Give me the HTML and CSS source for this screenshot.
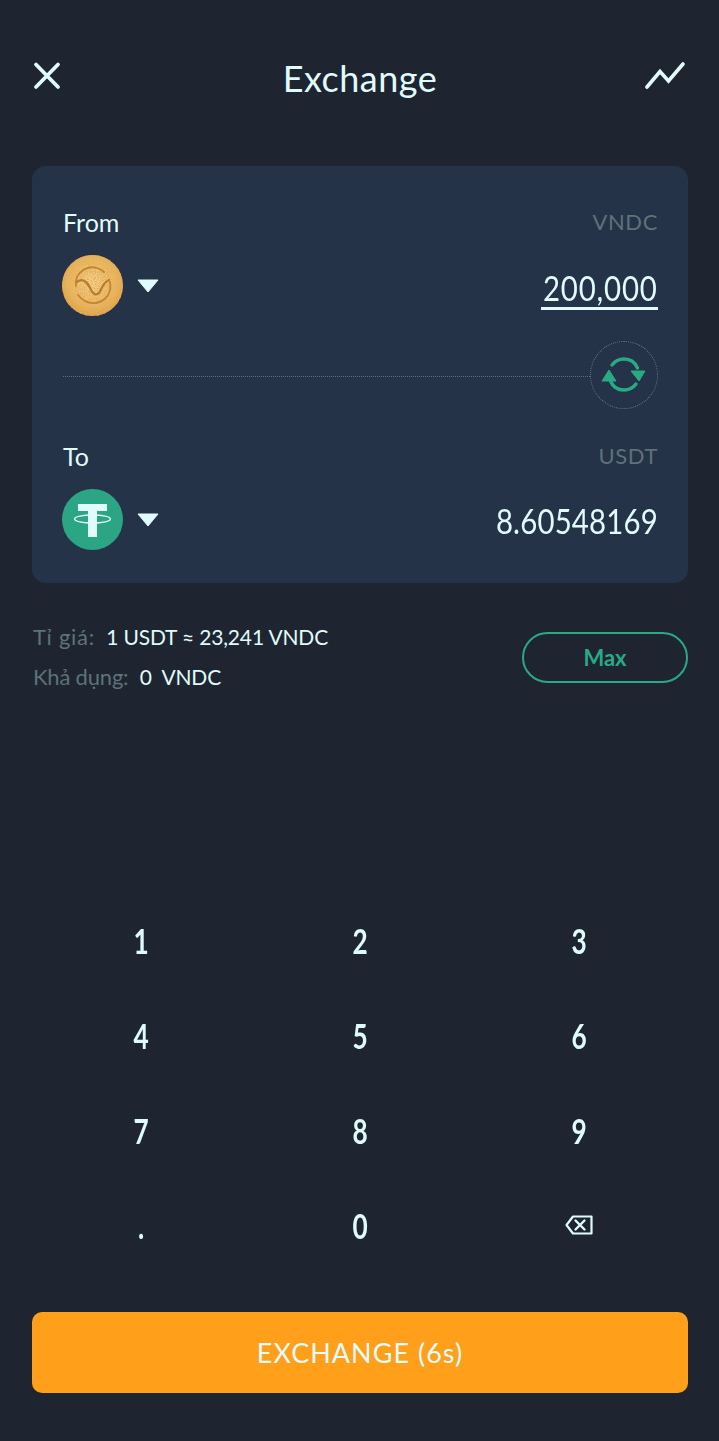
FILE: index.html
```html
<!DOCTYPE html>
<html lang="vi">
<head>
<meta charset="utf-8">
<title>Exchange</title>
<link rel="stylesheet" href="styles.css">
</head>
<body>
<main class="page">
  <header class="topbar">
    <svg class="icon-close" viewBox="0 0 30 30" width="30" height="30"><path d="M4 3.500 26 26M26 3.500 4 26" fill="none" stroke="#e0fbfc" stroke-width="3.800" stroke-linecap="round"/></svg>
    <h1 class="title">Exchange</h1>
    <svg class="icon-chart" viewBox="0 0 42 28" width="42" height="28"><path d="M3 25 16 9.500l8.500 9.500L39 2" fill="none" stroke="#e0fbfc" stroke-width="3.600" stroke-linecap="round" stroke-linejoin="miter"/></svg>
  </header>

  <section class="card">
    <div class="row-label"><span class="label">From</span><span class="ticker">VNDC</span></div>
    <div class="row-value">
      <div class="picker">
        <svg class="coin" viewBox="0 0 61 61" width="61" height="61">
          <defs>
            <radialGradient id="gold" cx="50%" cy="45%" r="55%"><stop offset="0" stop-color="#f9d592"/><stop offset="0.75" stop-color="#efb156"/><stop offset="1" stop-color="#dd9b3e"/></radialGradient>
            <filter id="grain" x="0" y="0" width="100%" height="100%"><feTurbulence type="fractalNoise" baseFrequency="0.9" numOctaves="2" seed="4"/><feColorMatrix values="0 0 0 0 0.72 0 0 0 0 0.45 0 0 0 0 0.12 0 0 0 3.6 -1.4"/><feComposite in2="SourceGraphic" operator="in"/></filter>
          </defs>
          <circle cx="30.500" cy="30.500" r="30.500" fill="url(#gold)"/>
          <circle cx="30.500" cy="30.500" r="30.500" fill="#000" filter="url(#grain)"/>
          <path d="M14 31C12 18 25 10 35 13c4 1 6 3 7 4M48 27c2 11-4 19-14 21-8 1-14-3-18-8" fill="none" stroke="#c48432" stroke-width="1.800" stroke-linecap="round"/>
          <path d="M15 27c6-5 11 1 14 8 2 4 5 6 8 3 3-4 4-11 10-13" fill="none" stroke="#b97c2c" stroke-width="2.200" stroke-linecap="round"/>
        </svg>
        <svg class="caret" viewBox="0 0 22 14" width="22" height="14"><path d="M1 1h20L11 13z" fill="#e0fbfc" stroke="#e0fbfc" stroke-linejoin="round"/></svg>
      </div>
      <span class="amount-input"><span class="amount amount-typed">200,000</span></span>
    </div>

    <div class="swap-row">
      <div class="divider"></div>
      <div class="swap">
        <svg viewBox="0 0 68 68" width="68" height="68">
          <path d="M22 24C25 20 30 18 34 18c6 0 11 3 13.500 9" fill="none" stroke="#2aa985" stroke-width="3.400" stroke-linecap="round"/>
          <path d="M41 30h14l-6 10z" fill="#2aa985" stroke="#2aa985" stroke-width="1" stroke-linejoin="round"/>
          <path d="M46 43c-3 4-7 6-12 6-6 0-11-3-13.500-9" fill="none" stroke="#2aa985" stroke-width="3.400" stroke-linecap="round"/>
          <path d="M12 40h14l-7-11z" fill="#2aa985" stroke="#2aa985" stroke-width="1" stroke-linejoin="round"/>
        </svg>
      </div>
    </div>

    <div class="row-label"><span class="label">To</span><span class="ticker">USDT</span></div>
    <div class="row-value">
      <div class="picker">
        <svg class="coin" viewBox="0 0 61 61" width="61" height="61">
          <circle cx="30.500" cy="30.500" r="30.500" fill="#2ba583"/>
          <path d="M16 15h29v7H35v26h-9V22H16z" fill="#e0fbfc"/>
          <ellipse cx="30.500" cy="30" rx="18" ry="4" fill="none" stroke="#e0fbfc" stroke-width="1.300"/>
        </svg>
        <svg class="caret" viewBox="0 0 22 14" width="22" height="14"><path d="M1 1h20L11 13z" fill="#e0fbfc" stroke="#e0fbfc" stroke-linejoin="round"/></svg>
      </div>
      <span class="amount">8.60548169</span>
    </div>
  </section>

  <section class="info">
    <div class="info-lines">
      <p class="info-line"><span class="muted muted-rate">Tỉ giá:</span> <span>1 USDT ≈ 23,241 VNDC</span></p>
      <p class="info-line"><span class="muted muted-avail">Khả dụng:</span> <span>0&nbsp; VNDC</span></p>
    </div>
    <button class="max" type="button">Max</button>
  </section>

  <section class="keypad">
    <span class="key"><span class="digit">1</span></span><span class="key"><span class="digit">2</span></span><span class="key"><span class="digit">3</span></span>
    <span class="key"><span class="digit">4</span></span><span class="key"><span class="digit">5</span></span><span class="key"><span class="digit">6</span></span>
    <span class="key"><span class="digit">7</span></span><span class="key"><span class="digit">8</span></span><span class="key"><span class="digit">9</span></span>
    <span class="key"><span class="digit">.</span></span><span class="key"><span class="digit">0</span></span>
    <span class="key">
      <svg viewBox="0 0 28 20" width="28" height="20"><path d="M8 1.500h18.500v17H8L1.500 10z" fill="none" stroke="#e0fbfc" stroke-width="2.200" stroke-linejoin="round"/><path d="M10.500 5.500l9 9M19.500 5.500l-9 9" fill="none" stroke="#e0fbfc" stroke-width="2.400" stroke-linecap="round"/></svg>
    </span>
  </section>

  <button class="cta" type="button">EXCHANGE (6s)</button>
</main>
</body>
</html>
```
FILE: styles.css
```css
* { box-sizing: border-box; }
html, body { margin: 0; padding: 0; }
body {
  background: #1e2530;
  color: #e0fbfc;
  font-family: "Lato", "Noto Sans", sans-serif;
}
.page {
  width: 719px;
  height: 1441px;
  padding: 50px 31px 0 32px;
  display: flex;
  flex-direction: column;
  overflow: hidden;
}
.topbar {
  height: 56px;
  display: grid;
  grid-template-columns: 1fr auto 1fr;
  align-items: center;
}
.icon-close { margin-top: -5px; }
.icon-chart { margin-top: -5px; margin-right: 2px; justify-self: end; }
.title {
  margin: 0;
  font-size: 36px;
  font-weight: 400;
  line-height: 56px;
  letter-spacing: 0.5px;
}
.card {
  margin-top: 60px;
  height: 417px;
  padding: 42px 30px 0 31px;
  background: #243347;
  border-radius: 14px;
}
.row-label {
  height: 30px;
  padding-bottom: 3px;
  display: flex;
  align-items: center;
  justify-content: space-between;
}
.label { font-size: 25px; }
.ticker { font-size: 22px; color: #5d7279; letter-spacing: 0.6px; }
.row-value {
  margin-top: 17px;
  height: 61px;
  display: flex;
  align-items: center;
  justify-content: space-between;
}
.picker { display: flex; align-items: center; gap: 14px; margin-left: -1px; }
.coin { display: block; }
.caret { display: block; }
.amount {
  display: inline-block;
  font-size: 35px;
  letter-spacing: 0.2px;
  transform: scaleX(0.84);
  transform-origin: right center;
}
.amount-typed { letter-spacing: 1px; }
.amount-input {
  display: flex;
  justify-content: flex-end;
  width: 117px;
  border-bottom: 3px solid #e0fbfc;
  line-height: 38px;
  padding-bottom: 1px;
  margin-top: 6px;
  white-space: nowrap;
}
.swap-row {
  margin-top: 25px;
  height: 68px;
  display: flex;
  align-items: center;
}
.divider { flex: 1; border-top: 1px dotted #5d6f7c; margin-top: 2px; }
.swap {
  width: 68px;
  height: 68px;
  border: 1px dotted #6b7c88;
  border-radius: 50%;
  display: flex;
  align-items: center;
  justify-content: center;
}
.swap svg { display: block; flex: none; }
.swap-row + .row-label { margin-top: 33px; }
.info {
  margin-top: 40px;
  display: flex;
  align-items: center;
  justify-content: space-between;
}
.info-lines { padding-left: 1px; }
.info-line {
  margin: 0;
  height: 40px;
  line-height: 28px;
  font-size: 21px;
  letter-spacing: -0.15px;
  white-space: nowrap;
}
.muted { font-size: 22px; color: #5d7279; margin-right: 6px; }
.muted-rate { letter-spacing: 0.7px; }
.muted-avail { letter-spacing: -0.2px; }
.max {
  width: 166px;
  height: 51px;
  margin-top: -11px;
  background: none;
  border: 2px solid #2aa985;
  border-radius: 26px;
  color: #2aa985;
  font: 700 22px "Lato", sans-serif;
}
.keypad {
  margin-top: 189px;
  display: grid;
  grid-template-columns: repeat(3, 1fr);
  grid-auto-rows: 95px;
  height: 380px;
}
.key {
  display: flex;
  align-items: center;
  justify-content: center;
}
.digit {
  font-size: 35px;
  font-weight: 700;
  transform: scaleX(0.75);
}
.cta {
  margin-top: 40px;
  height: 81px;
  border: 0;
  border-radius: 10px;
  background: #ff9f1a;
  color: #e0fbfc;
  font: 400 27px "Lato", sans-serif;
  letter-spacing: 1px;
}
```
